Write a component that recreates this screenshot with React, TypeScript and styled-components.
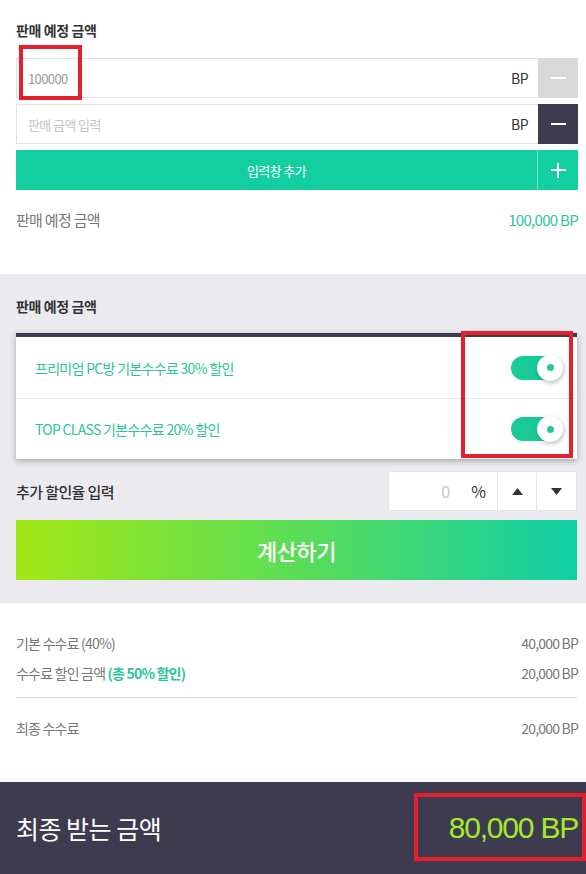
import styled, { createGlobalStyle } from "styled-components";

const GlobalStyle = createGlobalStyle`
  body {
    margin: 0;
    background: #fff;
    font-family: "Noto Sans CJK KR", "Noto Sans", sans-serif;
    color: #333;
  }
  * { box-sizing: border-box; }
`;

const colors = {
  green: "#13cfa0",
  greenText: "#2bc499",
  dark: "#3e3b51",
  gray: "#ebebef",
  red: "#e3202b",
};

function App() {
  return (
    <>
      <GlobalStyle />
      <Page>
        <TopSection>
          <Title>판매 예정 금액</Title>
          <InputRow>
            <InputBox>
              <InputValue>100000</InputValue>
              <Unit>BP</Unit>
            </InputBox>
            <SquareButton $bg="#d9d9d9">
              <Minus />
            </SquareButton>
          </InputRow>
          <InputRow>
            <InputBox>
              <InputValue $placeholder>판매 금액 입력</InputValue>
              <Unit>BP</Unit>
            </InputBox>
            <SquareButton $bg={colors.dark}>
              <Minus />
            </SquareButton>
          </InputRow>
          <AddButton>
            <AddLabel>입력창 추가</AddLabel>
            <AddPlus>
              <Plus />
            </AddPlus>
          </AddButton>
          <SummaryRow>
            <span>판매 예정 금액</span>
            <SummaryValue>100,000 BP</SummaryValue>
          </SummaryRow>
        </TopSection>

        <GraySection>
          <Title>판매 예정 금액</Title>
          <Card>
            <OptionRow>
              <OptionText>프리미엄 PC방 기본수수료 30% 할인</OptionText>
              <Toggle>
                <Knob />
              </Toggle>
            </OptionRow>
            <OptionRow>
              <OptionText>TOP CLASS 기본수수료 20% 할인</OptionText>
              <Toggle>
                <Knob />
              </Toggle>
            </OptionRow>
          </Card>
          <DiscountRow>
            <DiscountLabel>추가 할인율 입력</DiscountLabel>
            <Stepper>
              <StepValue>
                <StepNumber>0</StepNumber>
                <StepUnit>%</StepUnit>
              </StepValue>
              <StepButton>
                <svg width="11" height="7" viewBox="0 0 11 7">
                  <polygon points="5.5,0 11,7 0,7" fill="#333" />
                </svg>
              </StepButton>
              <StepButton>
                <svg width="11" height="7" viewBox="0 0 11 7">
                  <polygon points="0,0 11,0 5.5,7" fill="#333" />
                </svg>
              </StepButton>
            </Stepper>
          </DiscountRow>
          <CalcButton>계산하기</CalcButton>
        </GraySection>

        <ResultSection>
          <ResultRow>
            <span>기본 수수료 (40%)</span>
            <span>40,000 BP</span>
          </ResultRow>
          <ResultRow>
            <span>
              수수료 할인 금액 <Highlight>(총 50% 할인)</Highlight>
            </span>
            <span>20,000 BP</span>
          </ResultRow>
          <Divider />
          <ResultRow>
            <span>최종 수수료</span>
            <span>20,000 BP</span>
          </ResultRow>
        </ResultSection>

        <Footer>
          <FooterLabel>최종 받는 금액</FooterLabel>
          <FooterValue>80,000 BP</FooterValue>
        </Footer>

        {/* red annotation boxes */}
        <Marker style={{ left: 19, top: 45, width: 63, height: 55 }} />
        <Marker style={{ left: 461, top: 331, width: 112, height: 127 }} />
        <Marker style={{ left: 414, top: 793, width: 172, height: 68 }} />
      </Page>
    </>
  );
}

export default App;

const Page = styled.div`
  position: relative;
  width: 586px;
  overflow: hidden;
`;

const TopSection = styled.section`
  padding: 20px 8px 45px 16px;
  display: flex;
  flex-direction: column;
`;

const Title = styled.h2`
  margin: 0;
  font-size: 14px;
  line-height: 20px;
  font-weight: 700;
  color: #333;
  letter-spacing: -0.4px;
`;

const InputRow = styled.div`
  display: flex;
  height: 40px;
  margin-top: 6px;

  ${Title} + & {
    margin-top: 18px;
  }
`;

const InputBox = styled.div`
  flex: 1;
  display: flex;
  align-items: center;
  justify-content: space-between;
  border: 1px solid #e2e2e2;
  border-right: none;
  padding: 0 10px 0 11px;
  background: #fff;
`;

const InputValue = styled.span<{ $placeholder?: boolean }>`
  font-size: 13px;
  letter-spacing: -0.6px;
  color: ${(p) => (p.$placeholder ? "#c4c4c4" : "#999")};
`;

const Unit = styled.span`
  font-size: 14px;
  color: #333;
  letter-spacing: -0.5px;
`;

const SquareButton = styled.div<{ $bg: string }>`
  width: 40px;
  height: 40px;
  background: ${(p) => p.$bg};
  display: flex;
  align-items: center;
  justify-content: center;
`;

const Minus = styled.span`
  width: 15px;
  height: 2px;
  background: #fff;
`;

const Plus = styled.span`
  position: relative;
  width: 15px;
  height: 15px;

  &::before,
  &::after {
    content: "";
    position: absolute;
    background: #fff;
  }
  &::before {
    left: 0;
    top: 6.5px;
    width: 15px;
    height: 2px;
  }
  &::after {
    top: 0;
    left: 6.5px;
    width: 2px;
    height: 15px;
  }
`;

const AddButton = styled.div`
  display: flex;
  height: 40px;
  margin-top: 6px;
  background: ${colors.green};
`;

const AddLabel = styled.div`
  flex: 1;
  display: flex;
  align-items: center;
  justify-content: center;
  color: #fff;
  font-size: 13px;
  letter-spacing: -0.6px;
`;

const AddPlus = styled.div`
  width: 41px;
  border-left: 1px solid #5fe3c2;
  display: flex;
  align-items: center;
  justify-content: center;
`;

const SummaryRow = styled.div`
  display: flex;
  justify-content: space-between;
  align-items: center;
  margin-top: 19px;
  height: 20px;
  font-size: 15px;
  color: #777;
  letter-spacing: -0.7px;
`;

const SummaryValue = styled.span`
  color: ${colors.greenText};
`;

const GraySection = styled.section`
  background: ${colors.gray};
  padding: 22px 8px 23px 16px;
  display: flex;
  flex-direction: column;
`;

const Card = styled.div`
  margin-top: 17px;
  margin-right: 1px;
  background: #fff;
  border-top: 4px solid ${colors.dark};
  box-shadow: 0 2px 6px rgba(0, 0, 0, 0.3);
`;

const OptionRow = styled.div`
  height: 61px;
  display: flex;
  align-items: center;
  justify-content: space-between;
  padding: 0 16px 0 19px;

  & + & {
    border-top: 1px solid #e8e8ea;
  }
`;

const OptionText = styled.span`
  font-size: 14px;
  color: ${colors.greenText};
  letter-spacing: -0.7px;
`;

const Toggle = styled.div`
  position: relative;
  width: 50px;
  height: 24px;
  border-radius: 12px;
  background: linear-gradient(90deg, #1ccb95, #13c79d);
`;

const Knob = styled.span`
  position: absolute;
  right: -2px;
  top: -1px;
  width: 26px;
  height: 26px;
  border-radius: 50%;
  background: #fff;
  box-shadow: 1px 2px 4px rgba(0, 0, 0, 0.25);

  &::after {
    content: "";
    position: absolute;
    left: 9.5px;
    top: 9.5px;
    width: 7px;
    height: 7px;
    border-radius: 50%;
    background: ${colors.greenText};
  }
`;

const DiscountRow = styled.div`
  display: flex;
  align-items: center;
  justify-content: space-between;
  margin-top: 12px;
`;

const DiscountLabel = styled.span`
  font-size: 15px;
  font-weight: 500;
  color: #333;
  letter-spacing: -0.6px;
`;

const Stepper = styled.div`
  display: flex;
  height: 40px;
  background: #fff;
  border: 1px solid #e4e4e8;
  margin-right: 1px;
`;

const StepValue = styled.div`
  width: 108px;
  display: flex;
  align-items: center;
  justify-content: flex-end;
  padding-right: 11px;
  gap: 21px;
`;

const StepNumber = styled.span`
  font-size: 16px;
  color: #c8c8c8;
`;

const StepUnit = styled.span`
  font-size: 16px;
  color: #333;
`;

const StepButton = styled.div`
  width: 39px;
  border-left: 1px solid #e4e4e8;
  display: flex;
  align-items: center;
  justify-content: center;

  & + & {
    width: 40px;
  }
`;

const CalcButton = styled.div`
  margin-top: 9px;
  margin-right: 1px;
  height: 60px;
  display: flex;
  align-items: center;
  justify-content: center;
  background: linear-gradient(90deg, #a3e714 0%, #5bdd57 50%, #0fcea6 100%);
  color: #fff;
  font-size: 22px;
  font-weight: 500;
  letter-spacing: -0.5px;
`;

const ResultSection = styled.section`
  padding: 30px 8px 44px 16px;
  display: flex;
  flex-direction: column;
  gap: 10px;
`;

const ResultRow = styled.div`
  display: flex;
  justify-content: space-between;
  align-items: center;
  height: 20px;
  font-size: 14px;
  color: #777;
  letter-spacing: -0.8px;
`;

const Highlight = styled.span`
  color: ${colors.greenText};
  font-weight: 700;
`;

const Divider = styled.hr`
  margin: 4px 1px 10px 0;
  border: none;
  border-top: 1px solid #dedede;
`;

const Footer = styled.footer`
  height: 92px;
  background: ${colors.dark};
  display: flex;
  align-items: center;
  justify-content: space-between;
  padding: 0 8px 0 16px;
`;

const FooterLabel = styled.span`
  color: #fff;
  font-size: 25px;
  font-weight: 400;
  letter-spacing: -0.5px;
`;

const FooterValue = styled.span`
  color: #a4ea2c;
  font-family: "Liberation Sans", Arial, sans-serif;
  font-size: 30px;
  letter-spacing: -1.2px;
`;

const Marker = styled.div`
  position: absolute;
  border: 4px solid ${colors.red};
  pointer-events: none;
`;
